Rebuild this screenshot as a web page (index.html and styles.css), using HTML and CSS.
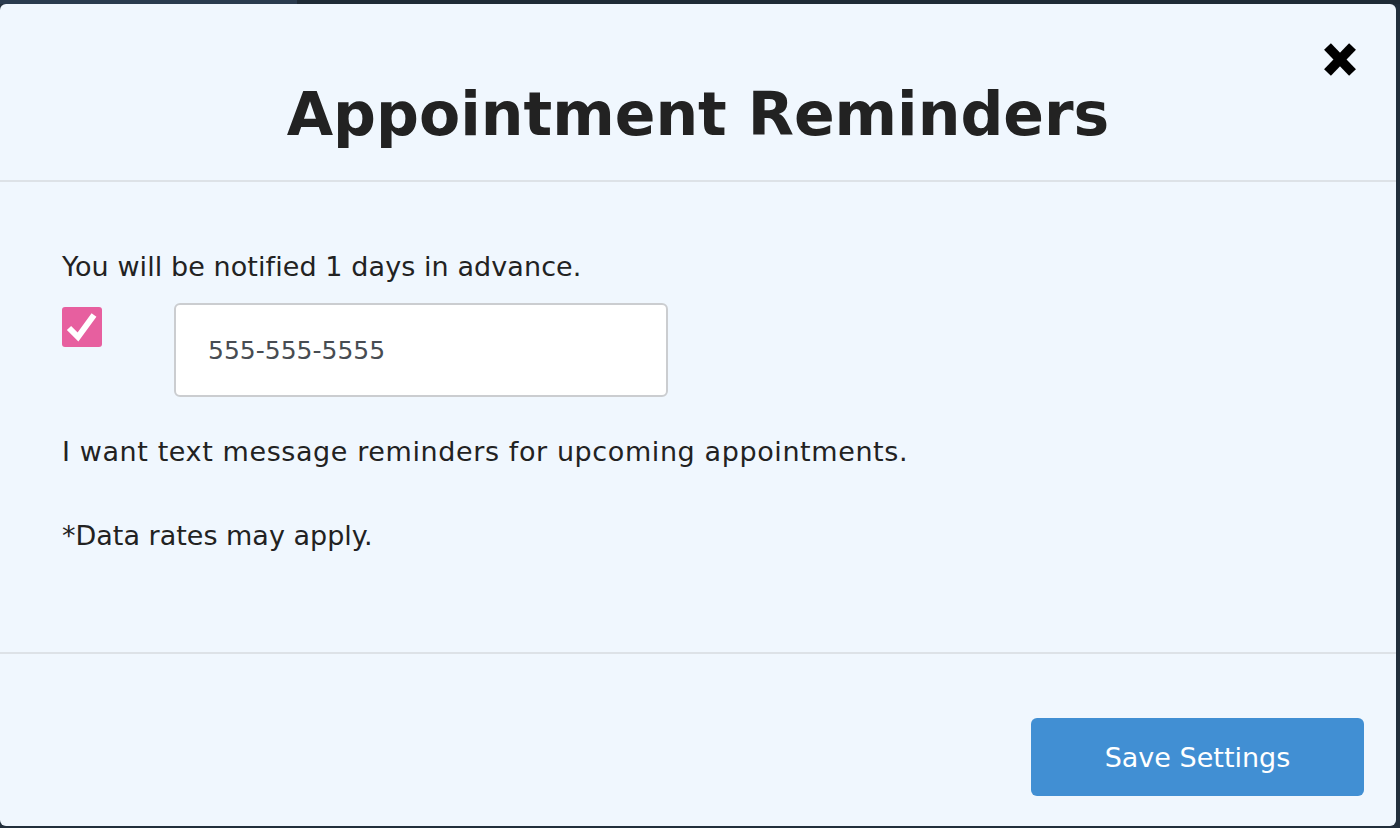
FILE: index.html
```html
<!DOCTYPE html>
<html lang="en">
<head>
<meta charset="utf-8">
<title>Appointment Reminders</title>
<link rel="stylesheet" href="styles.css">
</head>
<body>
<div class="backdrop">
  <div class="backdrop-top"><span class="seg-light"></span><span class="seg-dark"></span></div>
  <div class="modal">
    <header class="modal-header">
      <h1 class="modal-title">Appointment Reminders</h1>
      <button class="close-btn" aria-label="Close">
        <svg width="34" height="35" viewBox="0 0 34 35"><line x1="4.5" y1="4.5" x2="29.5" y2="30.5" stroke="#000" stroke-width="9.5"/><line x1="29.5" y1="4.5" x2="4.5" y2="30.5" stroke="#000" stroke-width="9.5"/></svg>
      </button>
    </header>
    <section class="modal-body">
      <p class="notice">You will be notified 1 days in advance.</p>
      <div class="sms-row">
        <span class="checkbox">
          <svg width="40" height="40" viewBox="0 0 40 40"><polyline points="7,21 16,30 32,8" fill="none" stroke="#fff" stroke-width="6"/></svg>
        </span>
        <input class="phone" type="text" value="555-555-5555">
      </div>
      <p class="label">I want text message reminders for upcoming appointments.</p>
      <p class="disclaimer">*Data rates may apply.</p>
    </section>
    <footer class="modal-footer">
      <button class="save-btn">Save Settings</button>
    </footer>
  </div>
</div>
</body>
</html>
```
FILE: styles.css
```css
html, body {
  margin: 0;
  padding: 0;
  height: 100%;
  overflow: hidden;
}
body {
  background: #222f3c;
  font-family: "DejaVu Sans", "Liberation Sans", sans-serif;
  color: #222;
}
.backdrop {
  width: 1400px;
  height: 828px;
  display: flex;
  flex-direction: column;
}
.backdrop-top {
  display: flex;
  height: 4px;
  flex: none;
}
.seg-light { width: 297px; background: #2a3b4e; }
.seg-dark { flex: 1; background: #1f2b36; }
.modal {
  width: 1396px;
  height: 822px;
  background: #f0f7fe;
  border-radius: 6px;
  display: flex;
  flex-direction: column;
}
.modal-header {
  height: 176px;
  border-bottom: 2px solid #dde2e7;
  display: flex;
  align-items: center;
  justify-content: center;
  position: relative;
  flex: none;
  box-sizing: content-box;
}
.modal-title {
  margin: 0;
  padding-top: 46px;
  font-size: 60px;
  font-weight: 700;
  color: #222;
  line-height: 1.164;
}
.close-btn {
  position: absolute;
  top: 38px;
  right: 39px;
  padding: 0;
  border: none;
  background: none;
  line-height: 0;
}
.modal-body {
  height: 472px;
  border-bottom: 2px solid #dde2e7;
  padding: 65px 62px 0;
  box-sizing: border-box;
  flex: none;
  font-size: 27px;
  line-height: 39px;
}
.modal-body p { margin: 0; }
.notice { letter-spacing: 0.08px; }
.sms-row {
  display: flex;
  align-items: flex-start;
  margin-top: 17px;
  gap: 72px;
}
.checkbox {
  width: 40px;
  height: 40px;
  margin-top: 4px;
  background: #e75f9f;
  border-radius: 3px;
  line-height: 0;
}
.phone {
  width: 494px;
  height: 94px;
  box-sizing: border-box;
  border: 2px solid #cbcdd0;
  border-radius: 6px;
  background: #fff;
  padding: 0 32px;
  font-family: inherit;
  font-size: 25px;
  color: #474c52;
  outline: none;
}
.label { margin-top: 35px !important; letter-spacing: 0.6px; }
.disclaimer { margin-top: 45px !important; }
.modal-footer {
  flex: 1;
  display: flex;
  justify-content: flex-end;
  align-items: flex-start;
  padding: 64px 32px 0 0;
}
.save-btn {
  width: 333px;
  height: 78px;
  border: none;
  border-radius: 6px;
  background: #418fd3;
  color: #fff;
  font-family: inherit;
  font-size: 27px;
}
```
